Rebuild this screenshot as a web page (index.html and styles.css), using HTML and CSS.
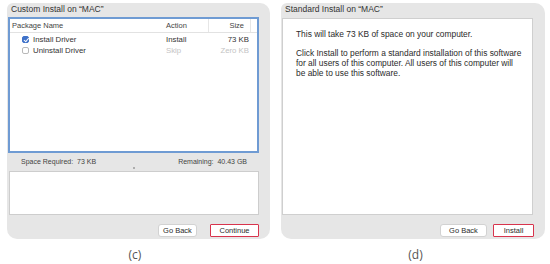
FILE: index.html
```html
<!DOCTYPE html>
<html lang="en">

<head>
    <meta charset="UTF-8">
    <title>Install on MAC</title>
    <link rel="stylesheet" href="styles.css">
</head>

<body>

    <div class="figures">
        <!-- (c) custom install -->
        <div class="figure figure-c">
            <div class="panel">
                <div class="panel-title">Custom Install on “MAC”</div>

                <div class="pkg-table">
                    <div class="pkg-row pkg-head">
                        <div class="col-name">Package Name</div>
                        <div class="col-action">Action</div>
                        <div class="col-size">Size</div>
                        <div class="col-gutter"></div>
                    </div>
                    <div class="pkg-row">
                        <div class="col-name"><span class="check checked"></span>Install Driver</div>
                        <div class="col-action">Install</div>
                        <div class="col-size">73 KB</div>
                        <div class="col-gutter"></div>
                    </div>
                    <div class="pkg-row muted">
                        <div class="col-name"><span class="check"></span><span class="label">Uninstall Driver</span></div>
                        <div class="col-action">Skip</div>
                        <div class="col-size">Zero KB</div>
                        <div class="col-gutter"></div>
                    </div>
                </div>

                <div class="space-line">
                    <div>Space Required:&nbsp; 73 KB</div>
                    <div>Remaining:&nbsp; 40.43 GB</div>
                </div>
                <div class="splitter"><span></span></div>
                <div class="desc-box"></div>

                <div class="panel-footer">
                    <button class="btn">Go Back</button>
                    <button class="btn btn-marked btn-continue">Continue</button>
                </div>
            </div>
            <div class="caption">(c)</div>
        </div>

        <!-- (d) standard install -->
        <div class="figure figure-d">
            <div class="panel">
                <div class="panel-title">Standard Install on “MAC”</div>

                <div class="info-box">
                    <p>This will take 73 KB of space on your computer.</p>
                    <p>Click Install to perform a standard installation of this software for all users of this computer. All users of this computer will be able to use this software.</p>
                </div>

                <div class="panel-footer">
                    <button class="btn">Go Back</button>
                    <button class="btn btn-marked btn-install">Install</button>
                </div>
            </div>
            <div class="caption">(d)</div>
        </div>
    </div>

</body>

</html>
```

FILE: styles.css
```css
* {
    box-sizing: border-box;
}

body {
    font-family: 'Liberation Sans', Arial, sans-serif;
    margin: 0;
    padding: 0;
    background-color: white;
    color: #2b2b2b;
}

.figures {
    display: flex;
    width: 550px;
    height: 264px;
}

.figure {
    width: 275px;
    padding-top: 3px;
}

.figure-c {
    padding-left: 7px;
}

.figure-d {
    padding-left: 6px;
}

.panel {
    display: flex;
    flex-direction: column;
    height: 236px;
    background-color: #e6e6e6;
    border-radius: 6px 10px 10px 10px;
}

.figure-c .panel {
    width: 263px;
}

.figure-d .panel {
    width: 264px;
}

.panel-title {
    height: 14px;
    line-height: 13px;
    padding-left: 4px;
    font-size: 8.5px;
    color: #333;
}

.figure-d .panel-title {
    height: 15px;
}

/* package table */
.pkg-table {
    margin-left: 1px;
    width: 251px;
    height: 136px;
    border: 2px solid #6f9bd3;
    background-color: white;
}

.pkg-row {
    display: flex;
    height: 11px;
    line-height: 11px;
    font-size: 7.8px;
    color: #333;
}

.pkg-head {
    height: 14px;
    line-height: 13px;
    font-size: 7.5px;
    color: #444;
    border-bottom: 1px solid #e2e2e2;
    margin-bottom: 1px;
}

.col-name {
    flex: 1;
    display: flex;
    align-items: center;
    padding-left: 2px;
}

.pkg-row:not(.pkg-head) .col-name {
    padding-left: 12px;
}

.col-action {
    width: 46px;
    padding-left: 3px;
}

.col-size {
    width: 41px;
    text-align: right;
    padding-right: 1px;
}

.pkg-head .col-action {
    border-right: 1px solid #e6e6e6;
}

.pkg-head .col-size {
    padding-right: 6px;
}

.col-gutter {
    width: 7px;
}

.pkg-head .col-gutter {
    border-left: 1px solid #e6e6e6;
}

.muted .col-action,
.muted .col-size {
    color: #c4c4c4;
}

.check {
    display: inline-block;
    width: 7px;
    height: 7px;
    margin-right: 4px;
    border: 1px solid #b9b9b9;
    border-radius: 2px;
    background-color: white;
}

.check.checked {
    border-color: #3f72c9;
    background-color: #3f72c9;
    position: relative;
}

.check.checked::after {
    content: "";
    position: absolute;
    left: 1.5px;
    top: 0px;
    width: 2px;
    height: 3.5px;
    border: solid white;
    border-width: 0 1px 1px 0;
    transform: rotate(40deg);
}

.space-line {
    display: flex;
    justify-content: space-between;
    height: 14px;
    padding: 4px 23px 0 14px;
    line-height: 9px;
    font-size: 7px;
    color: #444;
}

.splitter {
    height: 4px;
    display: flex;
    justify-content: center;
    padding-right: 10px;
}

.splitter span {
    width: 2px;
    height: 2px;
    border-radius: 50%;
    background-color: #9a9a9a;
}

.desc-box {
    margin-left: 2px;
    width: 250px;
    height: 44px;
    background-color: white;
    border: 1px solid #cdcdcd;
}

/* standard install text */
.info-box {
    margin-left: 1px;
    width: 251px;
    height: 197px;
    padding: 10px 8px 0 13px;
    background-color: white;
    border: 1px solid #cfcfcf;
    font-size: 8.4px;
    line-height: 10px;
    color: #2b2b2b;
}

.info-box p {
    margin: 0 0 9px 0;
}

.panel-footer {
    flex: 1;
    display: flex;
    justify-content: flex-end;
    align-items: flex-start;
    gap: 13px;
    padding-top: 9px;
    padding-right: 11px;
}

.figure-d .panel-footer {
    gap: 6px;
}

.btn {
    height: 13px;
    padding: 0;
    border: 1px solid #d2d2d2;
    border-radius: 3px;
    background-color: white;
    font-family: 'Liberation Sans', Arial, sans-serif;
    font-size: 7.5px;
    line-height: 11px;
    color: #2b2b2b;
    width: 39px;
}

.figure-d .btn {
    width: 47px;
}

.btn-marked {
    border: 1px solid #d8344d;
    border-radius: 1px;
}

.btn-continue {
    width: 49px;
}

.figure-d .btn-install {
    width: 41px;
}

.caption {
    margin-top: 7px;
    text-align: center;
    font-family: 'Open Sans', sans-serif;
    font-size: 12px;
    color: #555;
}

.figure-c .caption {
    padding-right: 12px;
}

.figure-d .caption {
    padding-right: 0;
}
```
